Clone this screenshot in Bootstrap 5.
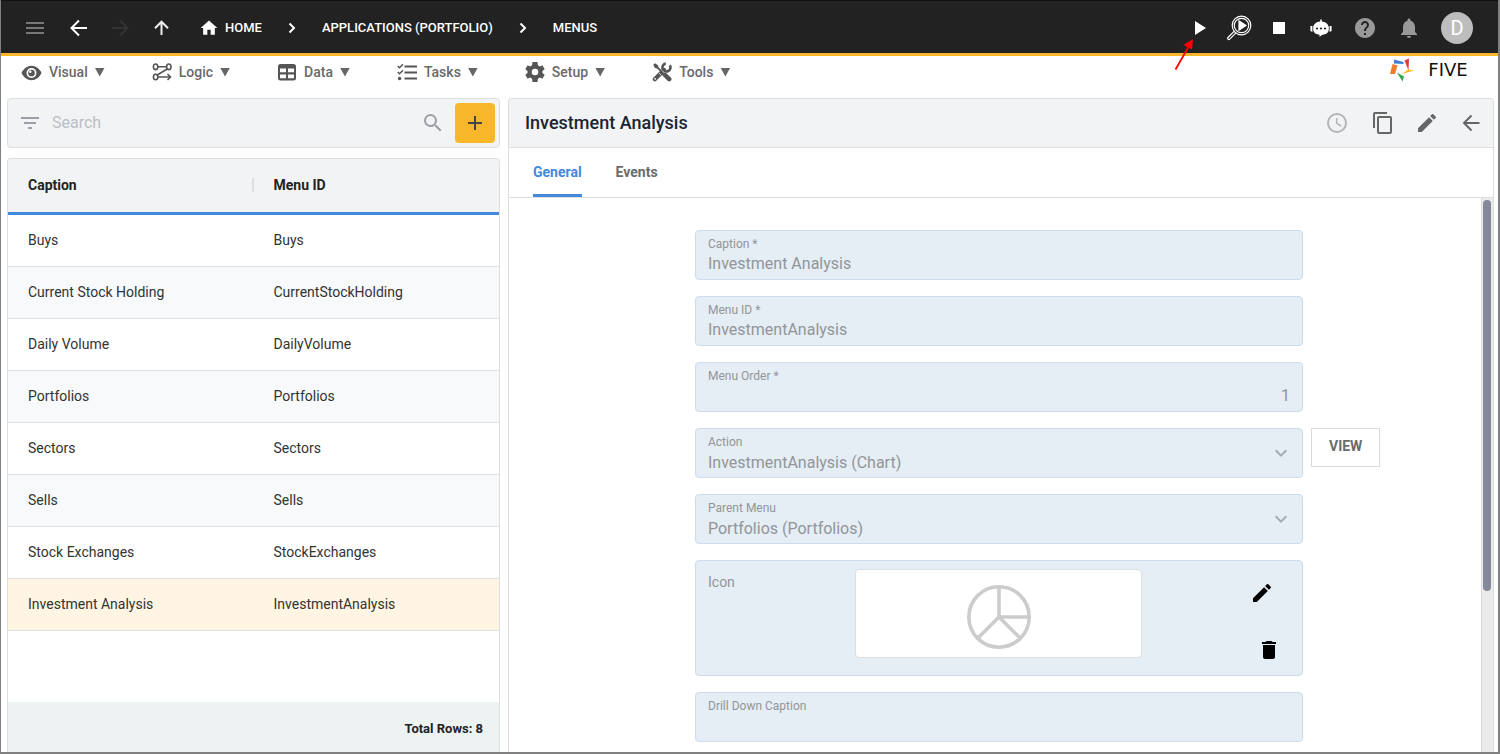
<!DOCTYPE html>
<html lang="en">
<head>
<meta charset="utf-8">
<meta name="viewport" content="width=device-width, initial-scale=1">
<title>Five - Menus</title>
<link href="https://cdn.jsdelivr.net/npm/bootstrap@5.3.0/dist/css/bootstrap.min.css" rel="stylesheet">
<style>
  body { font-family: Roboto, "Liberation Sans", sans-serif; font-size: 14px; line-height: 20px; color: #333; background: #fff; }
  svg { display: block; flex: none; }
  button { font-family: inherit; }
  .app-shell { height: 100vh; border: solid #808080; border-width: 0 2px 2px 1px; overflow: hidden; }
  .plain-btn { background: none; border: 0; padding: 0; color: inherit; display: flex; align-items: center; justify-content: center; }

  .top-bar { height: 56px; flex: none; background: #222; border-top: 1px solid #111; border-bottom: 3px solid #f8b62b; color: #fff; padding: 2px 25px 0 12px; }
  .nav-btn { width: 44px; height: 44px; }
  .tool-btn { width: 40px; height: 44px; }
  .forward-btn { width: 38px; height: 44px; }
  .crumb { font-size: 13px; font-weight: 500; color: #fff; text-decoration: none; text-transform: uppercase; }
  .crumb-home { gap: 6px; }
  .crumb-sep { margin: 0 22px; }
  .avatar { width: 32px; height: 32px; border-radius: 50%; background: #bdbdbd; color: #fff; font-size: 20px; margin-left: 10px; }
  .pointer-arrow { position: absolute; left: -6px; top: 30px; z-index: 5; pointer-events: none; }

  .menu-bar { height: 42px; flex: none; padding: 0 20px 10px; }
  .menu-list { gap: 47px; }
  .menu-item { gap: 7px; font-weight: 500; color: #6a6a6a; }
  .menu-item svg { color: #555; }
  .caret { width: 10px; height: 9px; background: #666; clip-path: polygon(0 0, 100% 0, 50% 100%); }
  .brand-link { gap: 4px; padding-bottom: 4px; }
  .brand-word { font-family: "DejaVu Sans", sans-serif; font-size: 18px; line-height: 20px; color: #111; width: 60px; text-align: center; }

  .work-area { display: grid; grid-template-columns: minmax(0, 1fr) minmax(0, 2fr); gap: 8px; padding: 0 4px 0 6px; min-height: 0; }
  .left-pane { min-height: 0; gap: 10px; }
  .right-pane { min-height: 0; border: 1px solid #dcdee0; border-bottom: 0; border-radius: 4px 4px 0 0; }
  .search-box { height: 50px; flex: none; background: #f1f3f4; border: 1px solid #dcdee0; border-radius: 4px; padding: 0 4px 0 10px; }
  .search-box input { border: 0; background: none; outline: 0; font-size: 16px; line-height: 24px; padding: 0; min-width: 0; margin: 0 8px 0 10px; }
  .search-box input::placeholder { color: #bcbfc1; opacity: 1; }
  .add-btn { width: 40px; height: 40px; background: #f8b62b; border-radius: 4px; color: #444; margin-left: 10px; }

  .grid-card { border: 1px solid #dcdee0; border-bottom: 0; border-radius: 4px 4px 0 0; min-height: 0; overflow: hidden; }
  .menu-table { width: 100%; table-layout: fixed; border-collapse: separate; border-spacing: 0; }
  .menu-table th { height: 56px; background: #f1f3f4; border-bottom: 3px solid #4488dc; font-weight: 700; padding: 0 20px 2px; color: #222; }
  .menu-table th:first-child > div { border-right: 2px solid #dcdee0; height: 14px; line-height: 14px; margin-right: -20px; }
  .menu-table td { height: 52px; border-bottom: 1px solid #dfe1e3; padding: 0 20px 2px; }
  .menu-table tr:nth-child(even) td { background: #f7f9fb; }
  .menu-table tr.current td { background: #fff5e2; }
  .grid-foot { height: 50px; flex: none; background: #edf2f3; font-size: 13px; font-weight: 700; color: #222; padding: 4px 16px 0; }

  .form-head { height: 49px; flex: none; background: #f1f3f4; border-bottom: 1px solid #dcdee0; padding-left: 16px; color: #666; }
  .form-head h1 { font-size: 18px; line-height: 24px; font-weight: 500; color: #1b2431; margin: 0; }
  .head-btn { width: 44px; height: 44px; }
  .head-btn.wide { width: 46px; padding-right: 2px; }
  .form-tabs { height: 50px; flex: none; border-bottom: 1px solid #dcdee0; padding: 0 24px; gap: 34px; }
  .form-tab { font-weight: 700; color: #6c6c6c; border-bottom: 3px solid transparent; padding-top: 2px; }
  .form-tab.active { color: #4488dc; border-bottom-color: #4488dc; }
  .form-scroll { min-height: 0; overflow: hidden; }
  .form-grid { display: grid; grid-template-columns: 186fr 608fr 178fr; row-gap: 16px; padding-top: 32px; align-content: start; overflow: hidden; }
  .form-grid > .field { grid-column: 2; }
  .field { height: 50px; position: relative; display: flex; flex-direction: column; background: #e5eef5; border: 1px solid #cddcec; border-radius: 4px; padding: 5px 12px 0; color: #929599; }
  .field label { font-size: 12px; line-height: 16px; }
  .field input, .field select { appearance: none; border: 0; background: none; padding: 0; font-size: 16px; line-height: 24px; height: 24px; color: #929599; width: 100%; opacity: 1; }
  .field select { height: 26px; line-height: 26px; }
  .field .chevron { position: absolute; right: 9px; top: 12px; color: #a4abb2; pointer-events: none; }
  .view-btn { grid-column: 3; justify-self: start; margin-left: 8px; height: 39px; padding: 0 17px 3px; background: #fff; border: 1px solid #d8dadc; font-size: 14px; font-weight: 700; color: #6c6c6c; }
  .icon-field { display: grid; grid-template-columns: 159fr 287fr 160fr; height: 116px; padding: 8px 0; }
  .icon-field .icon-name { padding: 4px 12px; font-size: 14px; line-height: 18px; }
  .icon-preview { height: 89px; background: #fff; border: 1px solid #dcdee0; border-radius: 4px; padding-top: 6px; }
  .icon-tools { color: #000; padding: 12px 21px 5px 0; }
  .icon-tools .edit { margin-right: 7px; }
  .scroll-track { width: 12px; flex: none; background: #ebebeb; border-left: 1px solid #d8d8d8; padding: 2px 1px; }
  .scroll-thumb { height: 71%; width: 8px; border-radius: 4px; background: #838999; }
</style>
</head>
<body>
<div class="app-shell d-flex flex-column">

  <header class="top-bar d-flex align-items-center justify-content-between">
    <div class="d-flex align-items-center">
      <button class="plain-btn nav-btn" aria-label="Menu"><svg width="24" height="24" viewBox="0 0 24 24" fill="#777"><path d="M3 6h18v2H3zM3 11h18v2H3zM3 16h18v2H3z"/></svg></button>
      <button class="plain-btn nav-btn" aria-label="Back"><svg width="24" height="24" viewBox="0 0 24 24" fill="none" stroke="#fff" stroke-width="2"><path d="M20 12H5M12 4.500L4.500 12l7.500 7.500"/></svg></button>
      <button class="plain-btn forward-btn" aria-label="Forward" disabled><svg width="24" height="24" viewBox="0 0 24 24" fill="none" stroke="#333" stroke-width="2"><path d="M4 12h15M12 4.500l7.500 7.500-7.500 7.500"/></svg></button>
      <button class="plain-btn nav-btn" aria-label="Up"><svg width="24" height="24" viewBox="0 0 24 24" fill="none" stroke="#eee" stroke-width="2"><path d="M12.500 19V6M6 12.200L12.500 5.700l6.500 6.500"/></svg></button>
      <nav class="d-flex align-items-center ms-3" aria-label="Breadcrumb">
        <a href="#" class="crumb crumb-home d-flex align-items-center"><svg width="20" height="20" viewBox="0 0 24 24" fill="#fff"><path d="M10 20v-6h4v6h5v-8h3L12 3 2 12h3v8z"/></svg><span>Home</span></a>
        <svg class="crumb-sep" width="16" height="20" viewBox="0 0 16 20" fill="none" stroke="#fff" stroke-width="2"><path d="M5.500 5.500L10 10l-4.500 4.500"/></svg>
        <a href="#" class="crumb">Applications (Portfolio)</a>
        <svg class="crumb-sep" width="16" height="20" viewBox="0 0 16 20" fill="none" stroke="#fff" stroke-width="2"><path d="M5.500 5.500L10 10l-4.500 4.500"/></svg>
        <a href="#" class="crumb">Menus</a>
      </nav>
    </div>
    <div class="d-flex align-items-center">
      <div class="position-relative">
        <button class="plain-btn tool-btn" aria-label="Run"><svg width="24" height="24" viewBox="0 0 24 24" fill="#fff"><path d="M8 5v14l11-7z"/></svg></button>
        <svg class="pointer-arrow" width="26" height="38" viewBox="0 0 26 38"><path d="M2.500 33.500L16 10" stroke="#f00" stroke-width="1.800"/><path d="M20 3l-1 10.500L10.500 9z" fill="#f00"/></svg>
      </div>
      <button class="plain-btn tool-btn" aria-label="Inspect"><svg width="26" height="26" viewBox="0 0 26 26" fill="none" stroke="#fff" stroke-width="1.200"><circle cx="15.500" cy="10.500" r="9.300"/><circle cx="15.500" cy="10.500" r="7.200"/><path d="M8.300 16.200l-6.300 6.300a1.200 1.200 0 0 0 1.700 1.700L10 17.900"/><path d="M13 5.800v9.400l7-4.700z" fill="#fff"/></svg></button>
      <button class="plain-btn tool-btn" aria-label="Stop"><svg width="12" height="12" viewBox="0 0 12 12" fill="#fff"><path d="M0 0h12v12H0z"/></svg></button>
      <button class="plain-btn nav-btn" aria-label="Assistant"><svg width="22" height="18" viewBox="0 0 22 18"><path d="M10.200 2.500V.6h1.600v1.900C15.500 2.700 18.300 5 18.800 8v3C18.300 14 15.800 15.500 12.500 15.700L9.500 17.800v-2.100C6.200 15.500 3.700 14 3.200 11V8C3.700 5 6.500 2.700 10.200 2.500zM.4 7h2v6l-2-1zM19.600 7h2v5l-2 1z" fill="#fff"/><circle cx="7" cy="9.500" r="1.100" fill="#222"/><circle cx="11" cy="9.500" r="1.100" fill="#222"/><circle cx="15" cy="9.500" r="1.100" fill="#222"/></svg></button>
      <button class="plain-btn nav-btn" aria-label="Help"><svg width="24" height="24" viewBox="0 0 24 24" fill="#999"><path d="M12 2C6.480 2 2 6.480 2 12s4.480 10 10 10 10-4.480 10-10S17.520 2 12 2zm1 17h-2v-2h2v2zm2.070-7.750l-.9.920C13.450 12.900 13 13.500 13 15h-2v-.5c0-1.100.45-2.100 1.170-2.830l1.240-1.260c.37-.36.59-.86.59-1.410 0-1.100-.9-2-2-2s-2 .9-2 2H8c0-2.210 1.790-4 4-4s4 1.790 4 4c0 .88-.36 1.680-.93 2.250z"/></svg></button>
      <button class="plain-btn nav-btn" aria-label="Notifications"><svg width="24" height="24" viewBox="0 0 24 24" fill="#999"><path d="M12 22c1.100 0 2-.9 2-2h-4c0 1.100.9 2 2 2zm6-6v-5c0-3.070-1.630-5.640-4.500-6.320V4c0-.83-.67-1.500-1.500-1.500s-1.500.67-1.500 1.500v.68C7.640 5.360 6 7.920 6 11v5l-2 2v1h16v-1z"/></svg></button>
      <button class="plain-btn avatar" aria-label="Account">D</button>
    </div>
  </header>

  <div class="menu-bar d-flex align-items-center justify-content-between">
    <nav class="menu-list d-flex align-items-center" aria-label="Main">
      <button class="plain-btn menu-item"><svg width="21" height="21" viewBox="0 0 22 22"><path d="M.5 11.500C2.800 7 6.500 4 11 4s8.200 3 10.500 7.500c-2.300 4.500-6 7.500-10.500 7.500S2.800 16 .5 11.500z" fill="currentColor"/><circle cx="11" cy="11.500" r="5.200" fill="#fff"/><circle cx="11" cy="11.500" r="3.500" fill="currentColor"/><circle cx="9.700" cy="10.100" r="1.300" fill="#fff"/></svg><span>Visual</span><i class="caret"></i></button>
      <button class="plain-btn menu-item"><svg width="20" height="20" viewBox="0 0 20 20" fill="none" stroke="currentColor" stroke-width="1.600"><ellipse cx="3.600" cy="4.800" rx="2.200" ry="2.800"/><ellipse cx="16.800" cy="4.800" rx="2.200" ry="2.800"/><ellipse cx="3.600" cy="15" rx="2.200" ry="2.800"/><path d="M6 4.800h8.500M15.200 7L5.300 13M6 15h12.500M15.500 12l3 3-3 3"/></svg><span>Logic</span><i class="caret"></i></button>
      <button class="plain-btn menu-item"><svg width="20" height="20" viewBox="0 0 20 20"><rect x="1" y="2" width="18" height="16.500" rx="2.500" fill="currentColor"/><path d="M3 6.500h6v3.800H3zM11 6.500h6v3.800h-6zM3 12.400h6v3.800H3zM11 12.400h6v3.800h-6z" fill="#fff"/></svg><span>Data</span><i class="caret"></i></button>
      <button class="plain-btn menu-item"><svg width="20" height="20" viewBox="0 0 20 20" fill="none" stroke="currentColor" stroke-width="2"><path d="M7.500 4.500H20M7.500 10.500H20M7.500 16.500H20"/><path d="M.7 4l1.800 1.800L6 2.300M.7 10l1.800 1.800L6 8.300" stroke-width="1.500"/><circle cx="2.600" cy="16.500" r="1.700" fill="currentColor" stroke="none"/></svg><span>Tasks</span><i class="caret"></i></button>
      <button class="plain-btn menu-item"><svg width="20" height="20" viewBox="2 2 20 20" fill="currentColor"><path d="M19.400 13a7.500 7.500 0 0 0 0-2l2.300-1.700-2.300-4-2.600 1.100a7.300 7.300 0 0 0-1.900-1.100L14.500 2h-5l-.4 3.300c-.7.300-1.300.6-1.900 1.100L4.600 5.300l-2.300 4L4.600 11a7.500 7.500 0 0 0 0 2l-2.300 1.700 2.300 4 2.600-1.100c.6.500 1.200.8 1.900 1.100l.4 3.300h5l.4-3.300c.7-.3 1.300-.6 1.900-1.100l2.600 1.100 2.300-4zM12 15.300a3.300 3.300 0 1 1 0-6.600 3.300 3.300 0 0 1 0 6.600z"/></svg><span>Setup</span><i class="caret"></i></button>
      <button class="plain-btn menu-item"><svg width="20" height="20" viewBox="0 0 20 20" fill="none" stroke="currentColor"><path d="M2.800 17.200L12 8" stroke-width="4.200" stroke-linecap="round"/><path d="M17.800 3.200a4 4 0 1 1-4-1.700" stroke-width="2.600"/><path d="M4 4l8 8" stroke-width="1.800"/><path d="M1.300 2.800L3 1.200l3 2 .3 2.300-1 1-2.400-.6z" fill="currentColor" stroke="none"/><path d="M12.500 12.500l4.700 4.700" stroke-width="4.500" stroke-linecap="round"/><path d="M7 11l2 2M10 8.500l2.500 2.500" stroke="#fff" stroke-width=".8"/><circle cx="3.200" cy="16.800" r=".9" fill="#fff" stroke="none"/></svg><span>Tools</span><i class="caret"></i></button>
    </nav>
    <a href="#" class="brand-link d-flex align-items-center text-decoration-none" aria-label="Five">
      <svg width="24" height="24" viewBox="0 0 24 24"><path d="M4 1.500L13.500 4v2L4 5.500z" fill="#3c7fd9"/><path d="M14.500 2.500L19 .5l-.5 12z" fill="#e53b38"/><path d="M2.500 6L7.500 7.500 5 16H0z" fill="#f37b2c"/><path d="M7 14.500l7 4-1.500 5z" fill="#35a852"/><path d="M12 16L18 11.500l6 1z" fill="#fbbc1d"/></svg>
      <span class="brand-word">FIVE</span>
    </a>
  </div>

  <main class="work-area flex-grow-1">
    <section class="left-pane d-flex flex-column">
      <div class="search-box d-flex align-items-center">
        <svg width="24" height="24" viewBox="0 0 24 24" fill="#9aa0a6"><path d="M10 18h4v-2h-4zM3 6v2h18V6zM6 13h12v-2H6z"/></svg>
        <input class="flex-grow-1" type="search" placeholder="Search" aria-label="Search">
        <svg width="24" height="24" viewBox="0 0 24 24" fill="#9aa0a6"><path d="M15.500 14h-.79l-.28-.27A6.471 6.471 0 0 0 16 9.500 6.500 6.500 0 1 0 9.500 16c1.610 0 3.090-.59 4.230-1.570l.27.28v.79l5 4.990L20.490 19zm-6 0a4.500 4.500 0 1 1 0-9 4.500 4.500 0 0 1 0 9z"/></svg>
        <button class="plain-btn add-btn" aria-label="Add"><svg width="24" height="24" viewBox="0 0 24 24" fill="currentColor"><path d="M19 13h-6v6h-2v-6H5v-2h6V5h2v6h6z"/></svg></button>
      </div>
      <div class="grid-card d-flex flex-column flex-grow-1">
        <div class="flex-grow-1 overflow-hidden">
          <table class="menu-table">
            <thead><tr><th scope="col"><div>Caption</div></th><th scope="col">Menu ID</th></tr></thead>
            <tbody>
              <tr><td>Buys</td><td>Buys</td></tr>
              <tr><td>Current Stock Holding</td><td>CurrentStockHolding</td></tr>
              <tr><td>Daily Volume</td><td>DailyVolume</td></tr>
              <tr><td>Portfolios</td><td>Portfolios</td></tr>
              <tr><td>Sectors</td><td>Sectors</td></tr>
              <tr><td>Sells</td><td>Sells</td></tr>
              <tr><td>Stock Exchanges</td><td>StockExchanges</td></tr>
              <tr class="current"><td>Investment Analysis</td><td>InvestmentAnalysis</td></tr>
            </tbody>
          </table>
        </div>
        <div class="grid-foot d-flex align-items-center justify-content-end">Total Rows: 8</div>
      </div>
    </section>

    <section class="right-pane d-flex flex-column overflow-hidden">
      <div class="form-head d-flex align-items-center justify-content-between">
        <h1>Investment Analysis</h1>
        <div class="d-flex">
          <button class="plain-btn head-btn wide" aria-label="History"><svg width="24" height="24" viewBox="0 0 24 24" fill="none" stroke="#b5b5b5"><circle cx="12" cy="12" r="9" stroke-width="2"/><path d="M11.700 7v5.300l4.500 2.700" stroke-width="1.500"/></svg></button>
          <button class="plain-btn head-btn" aria-label="Copy"><svg width="24" height="24" viewBox="0 0 24 24" fill="currentColor"><path d="M16 1H4c-1.100 0-2 .9-2 2v14h2V3h12V1zm3 4H8c-1.100 0-2 .9-2 2v14c0 1.100.9 2 2 2h11c1.100 0 2-.9 2-2V7c0-1.100-.9-2-2-2zm0 16H8V7h11v14z"/></svg></button>
          <button class="plain-btn head-btn" aria-label="Edit"><svg width="24" height="24" viewBox="0 0 24 24" fill="currentColor"><path d="M3 17.250V21h3.750L17.810 9.940l-3.750-3.750zM20.710 7.040a1 1 0 0 0 0-1.410l-2.340-2.340a1 1 0 0 0-1.410 0l-1.830 1.830 3.750 3.750z"/></svg></button>
          <button class="plain-btn head-btn" aria-label="Close"><svg width="24" height="24" viewBox="0 0 24 24" fill="none" stroke="currentColor" stroke-width="2"><path d="M20.500 12H6M12.500 4.500L5 12l7.500 7.500"/></svg></button>
        </div>
      </div>
      <div class="form-tabs d-flex" role="tablist">
        <button class="plain-btn form-tab active" role="tab" aria-selected="true">General</button>
        <button class="plain-btn form-tab" role="tab" aria-selected="false">Events</button>
      </div>
      <div class="form-scroll d-flex flex-grow-1">
        <form class="form-grid flex-grow-1">
          <div class="field"><label for="caption">Caption *</label><input id="caption" type="text" value="Investment Analysis" disabled></div>
          <div class="field"><label for="menuId">Menu ID *</label><input id="menuId" type="text" value="InvestmentAnalysis" disabled></div>
          <div class="field"><label for="menuOrder">Menu Order *</label><input id="menuOrder" class="text-end" type="text" value="1" disabled></div>
          <div class="field"><label for="action">Action</label><select id="action" disabled><option>InvestmentAnalysis (Chart)</option></select><svg class="chevron" width="24" height="24" viewBox="0 0 24 24" fill="none" stroke="currentColor" stroke-width="2"><path d="M6.700 9.300L12 14.600l5.300-5.300"/></svg></div>
          <button class="view-btn" type="button">VIEW</button>
          <div class="field"><label for="parentMenu">Parent Menu</label><select id="parentMenu" disabled><option>Portfolios (Portfolios)</option></select><svg class="chevron" width="24" height="24" viewBox="0 0 24 24" fill="none" stroke="currentColor" stroke-width="2"><path d="M6.700 9.300L12 14.600l5.300-5.300"/></svg></div>
          <div class="field icon-field">
            <span class="icon-name">Icon</span>
            <div class="icon-preview d-flex align-items-center justify-content-center"><svg width="66" height="66" viewBox="0 0 66 66" fill="none" stroke="#ccc" stroke-width="3.600"><circle cx="33" cy="33" r="30.200"/><path d="M33 3v30h30M11.500 54.500L33 33l21.500 21.500"/></svg></div>
            <div class="icon-tools d-flex flex-column align-items-end justify-content-between">
              <button type="button" class="plain-btn edit" aria-label="Change icon"><svg width="24" height="24" viewBox="0 0 24 24" fill="currentColor"><path d="M3 17.250V21h3.750L17.810 9.940l-3.750-3.750zM20.710 7.040a1 1 0 0 0 0-1.410l-2.340-2.340a1 1 0 0 0-1.410 0l-1.830 1.830 3.750 3.750z"/></svg></button>
              <button type="button" class="plain-btn" aria-label="Delete icon"><svg width="24" height="24" viewBox="0 0 24 24" fill="currentColor"><path d="M6 19c0 1.100.9 2 2 2h8c1.100 0 2-.9 2-2V7H6zM19 4h-3.500l-1-1h-5l-1 1H5v2h14z"/></svg></button>
            </div>
          </div>
          <div class="field"><label for="drill">Drill Down Caption</label><input id="drill" type="text" disabled></div>
        </form>
        <div class="scroll-track"><div class="scroll-thumb"></div></div>
      </div>
    </section>
  </main>
</div>
<script src="https://cdn.jsdelivr.net/npm/bootstrap@5.3.0/dist/js/bootstrap.bundle.min.js"></script>
</body>
</html>
